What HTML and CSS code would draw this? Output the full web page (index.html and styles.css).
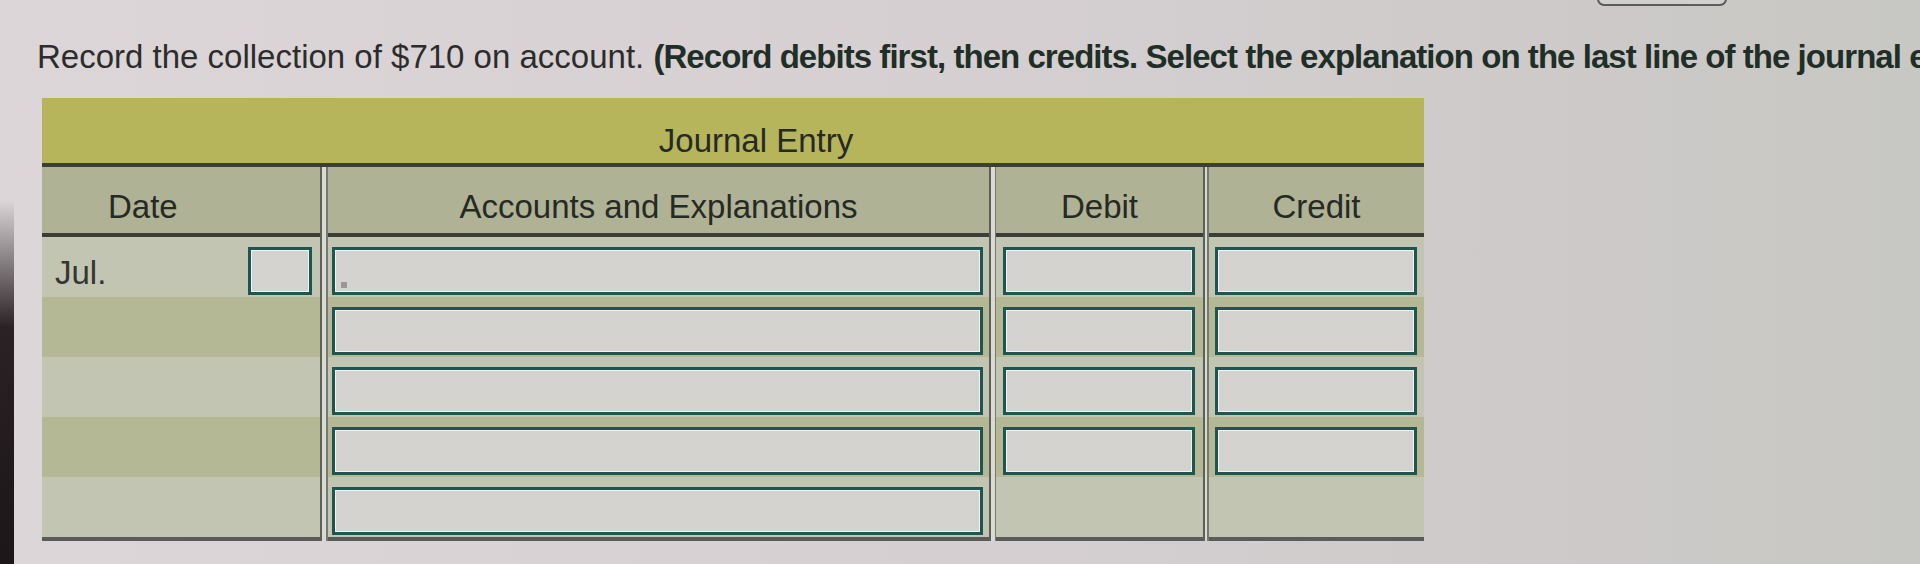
FILE: index.html
```html
<!DOCTYPE html>
<html lang="en">
<head>
<meta charset="utf-8">
<title>Journal Entry</title>
<link rel="stylesheet" href="styles.css">
</head>
<body>
<div class="page">
  <div class="top-button"></div>
  <p class="prompt">Record the collection of $710 on account. <b>(Record debits first, then credits. Select the explanation on the last line of the journal entry.)</b></p>
  <div class="journal">
    <div class="band">Journal Entry</div>
    <div class="cols">
      <div class="col col-date">
        <div class="head head-date">Date</div>
        <div class="row pale date-row"><span class="month">Jul.</span><span class="box box-day"></span></div>
        <div class="row olive"></div>
        <div class="row pale"></div>
        <div class="row olive"></div>
        <div class="row pale"></div>
      </div>
      <div class="divider"></div>
      <div class="col col-acct">
        <div class="head">Accounts and Explanations</div>
        <div class="row pale"><span class="box"><i class="marker"></i></span></div>
        <div class="row olive"><span class="box"></span></div>
        <div class="row pale"><span class="box"></span></div>
        <div class="row olive"><span class="box"></span></div>
        <div class="row pale"><span class="box"></span></div>
      </div>
      <div class="divider d2"></div>
      <div class="col col-debit">
        <div class="head">Debit</div>
        <div class="row pale"><span class="box"></span></div>
        <div class="row olive"><span class="box"></span></div>
        <div class="row pale"><span class="box"></span></div>
        <div class="row olive"><span class="box"></span></div>
        <div class="row pale"></div>
      </div>
      <div class="divider d3"></div>
      <div class="col col-credit">
        <div class="head">Credit</div>
        <div class="row pale"><span class="box"></span></div>
        <div class="row olive"><span class="box"></span></div>
        <div class="row pale"><span class="box"></span></div>
        <div class="row olive"><span class="box"></span></div>
        <div class="row pale"></div>
      </div>
    </div>
  </div>
</div>
</body>
</html>
```
FILE: styles.css
```css
html, body {
  margin: 0;
  padding: 0;
}
body {
  width: 1920px;
  height: 564px;
  overflow: hidden;
  font-family: "Liberation Sans", Arial, sans-serif;
  background: linear-gradient(90deg, #dcd6d8 0%, #d6d0d2 45%, #cfcbcb 75%, #c7c7c3 100%);
}
.page {
  position: relative;
  height: 564px;
}
.page::before {
  content: "";
  position: absolute;
  left: 0;
  top: 200px;
  bottom: 0;
  width: 14px;
  background: linear-gradient(180deg, rgba(40, 30, 32, 0) 0%, #2a2224 35%, #1c1618 100%);
}
.top-button {
  position: absolute;
  left: 1597px;
  top: -30px;
  width: 126px;
  height: 32px;
  border: 2px solid #5b5b5b;
  border-radius: 7px;
  background: #d2cfcf;
}
.prompt {
  margin: 0;
  padding: 38px 0 0 37px;
  font-size: 33px;
  line-height: 38px;
  white-space: nowrap;
  color: #2c2c2c;
}
.prompt b {
  color: #1f2e26;
  letter-spacing: -0.95px;
}
.journal {
  margin: 22px 0 0 42px;
  width: 1382px;
}
.band {
  box-sizing: border-box;
  height: 69px;
  padding: 24px 0 0 46px;
  text-align: center;
  font-size: 33px;
  line-height: 38px;
  color: #262a24;
  background: #b6b55c;
  border-bottom: 4px solid #3b3e39;
}
.cols {
  display: flex;
}
.col {
  display: flex;
  flex-direction: column;
}
.col-date { width: 278px; }
.col-acct { width: 661px; }
.col-debit { width: 207px; }
.col-credit { width: 215px; }
.head {
  box-sizing: border-box;
  height: 70px;
  padding-top: 21px;
  text-align: center;
  font-size: 33px;
  line-height: 38px;
  color: #262a24;
  background: #afb294;
  border-bottom: 4px solid #3b3e39;
}
.head-date {
  text-align: left;
  padding-left: 66px;
}
.row {
  box-sizing: border-box;
  height: 60px;
  display: flex;
  align-items: flex-start;
  padding-top: 10px;
}
.col .row:last-child {
  height: 64px;
  border-bottom: 4px solid #5a5c59;
}
.pale { background: #c2c5b2; }
.olive { background: #b5b895; }
.date-row {
  padding-top: 0;
  justify-content: space-between;
  align-items: flex-start;
}
.month {
  padding: 17px 0 0 13px;
  font-size: 33px;
  line-height: 38px;
  color: #333631;
}
.box {
  position: relative;
  box-sizing: border-box;
  display: block;
  height: 48px;
  flex: 1;
  background: #d4d3d0;
  border: 3px solid #1e5550;
  box-shadow: inset 0 0 0 1px #eef4f2;
}
.box-day {
  flex: none;
  width: 64px;
  margin: 10px 8px 0 0;
}
.col-acct .box { margin: 0 6px 0 4px; }
.col-debit .box { margin: 0 8px 0 7px; }
.col-credit .box { margin: 0 7px 0 6px; }
.marker {
  position: absolute;
  left: 6px;
  bottom: 4px;
  width: 6px;
  height: 6px;
  background: #9a9896;
}
.divider {
  width: 8px;
  background: linear-gradient(90deg, #5d605a 0 2px, #d9dbd0 2px 6px, #777a73 6px 8px);
}
.d2 { width: 7px; }
.d3 { width: 6px; background: linear-gradient(90deg, #5d605a 0 2px, #d9dbd0 2px 4px, #777a73 4px 6px); }
```
